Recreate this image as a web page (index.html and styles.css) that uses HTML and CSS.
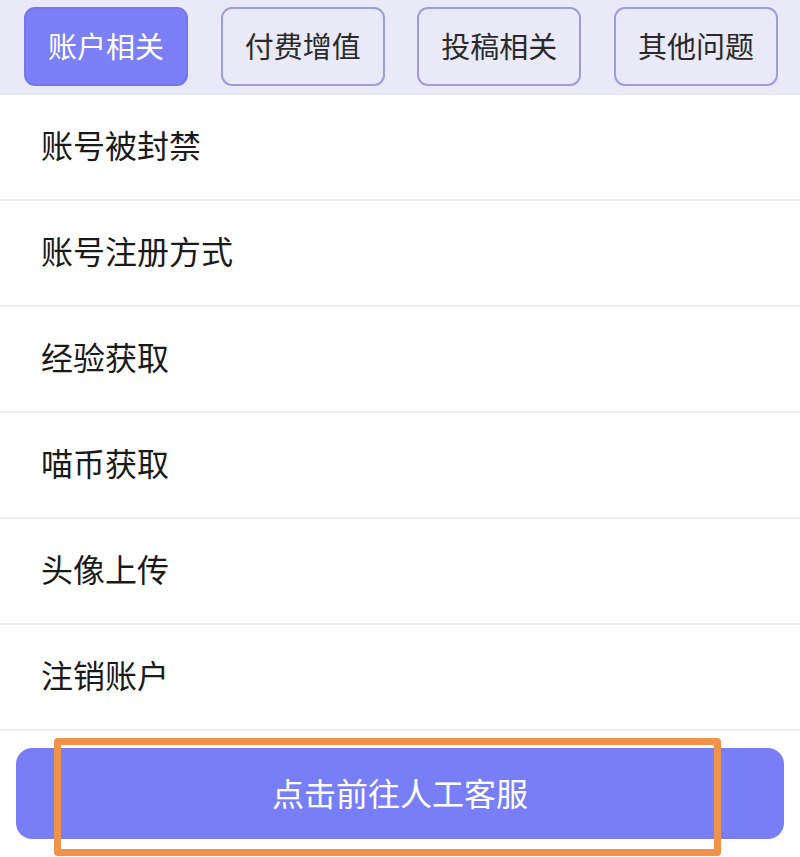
FILE: index.html
```html
<!DOCTYPE html>
<html lang="zh-CN">
<head>
  <meta charset="UTF-8" />
  <meta name="viewport" content="width=device-width, initial-scale=1.0"/>
  <title>帮助中心</title>
  <link rel="stylesheet" href="styles.css">
</head>
<body>
  <div class="page">
    <div class="tabBar">
      <div class="tab active">账户相关</div>
      <div class="tab">付费增值</div>
      <div class="tab">投稿相关</div>
      <div class="tab">其他问题</div>
    </div>

    <div class="questionList">
      <div class="questionItem">账号被封禁</div>
      <div class="questionItem">账号注册方式</div>
      <div class="questionItem">经验获取</div>
      <div class="questionItem">喵币获取</div>
      <div class="questionItem">头像上传</div>
      <div class="questionItem">注销账户</div>
    </div>

    <div class="footer">
      <button class="serviceBtn">点击前往人工客服</button>
      <div class="highlight"></div>
    </div>
  </div>
</body>
</html>
```

FILE: styles.css
```css
* {
  box-sizing: border-box;
}

body {
  margin: 0;
  padding: 0;
  background-color: #fff;
  font-family: "Noto Sans CJK SC", "Noto Sans", sans-serif;
  color: #222;
}

.page {
  width: 800px;
  height: 857px;
  overflow: hidden;
  display: flex;
  flex-direction: column;
}

.tabBar {
  height: 95px;
  background-color: #e9e9f8;
  display: flex;
  justify-content: space-between;
  padding: 7px 22px 9px 24px;
}

.tab {
  width: 164px;
  height: 79px;
  border: 2px solid #9d9ddc;
  border-radius: 11px;
  display: flex;
  justify-content: center;
  align-items: center;
  padding-bottom: 4px;
  font-size: 29px;
  color: #2a2a2a;
}

.tab.active {
  background-color: #7b80f7;
  border-color: #7277ef;
  color: #fff;
}

.questionList {
  display: flex;
  flex-direction: column;
}

.questionItem {
  height: 106px;
  border-bottom: 2px solid #ececec;
  display: flex;
  align-items: center;
  padding-left: 41px;
  padding-bottom: 6px;
  font-size: 32px;
  color: #1a1a1a;
}

.footer {
  position: relative;
  flex: 1;
  padding: 17px 16px 0;
}

.serviceBtn {
  width: 100%;
  height: 91px;
  border: none;
  border-radius: 16px;
  background-color: #787ff6;
  color: #fff;
  font-family: "Noto Sans CJK SC", "Noto Sans", sans-serif;
  font-size: 32px;
  padding-bottom: 4px;
  cursor: pointer;
}

/* orange frame drawn over the button */
.highlight {
  position: absolute;
  left: 54px;
  top: 7px;
  width: 667px;
  height: 118px;
  border: 7px solid #f0924a;
  border-radius: 4px;
  pointer-events: none;
}
```
